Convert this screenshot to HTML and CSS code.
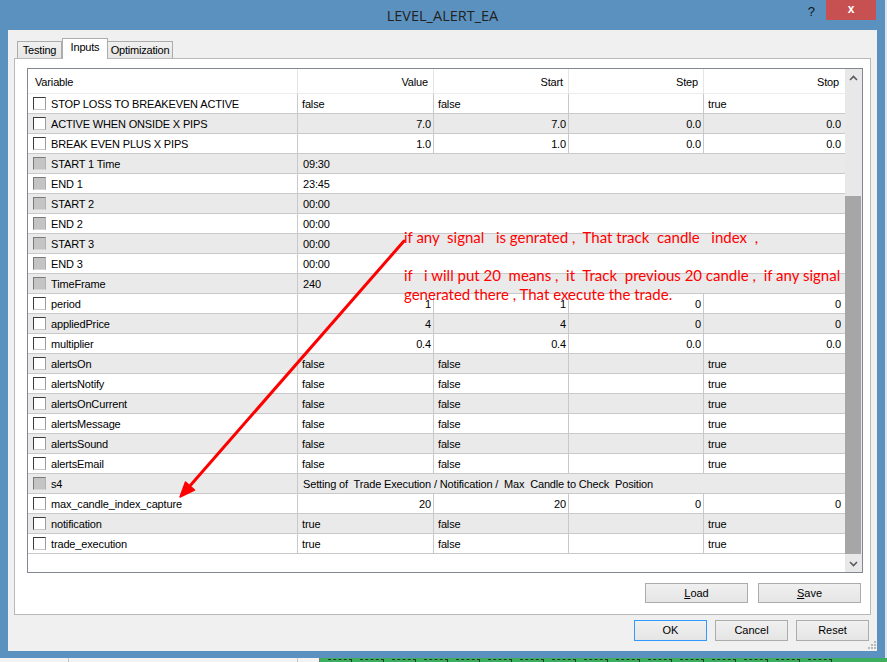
FILE: index.html
```html
<!DOCTYPE html>
<html>
<head>
<meta charset="utf-8">
<link rel="stylesheet" href="styles.css">
</head>
<body>
<div class="screen">
  <div class="top">
    <div class="window">
      <div class="titlebar">
        <div class="title">LEVEL_ALERT_EA</div>
        <div class="controls">
          <div class="help">?</div>
          <div class="close">x</div>
        </div>
      </div>
      <div class="client">
        <div class="tabs">
          <div class="tab t-testing">Testing</div>
          <div class="tab t-inputs active">Inputs</div>
          <div class="tab t-opt">Optimization</div>
        </div>
        <div class="panel">
          <div class="list">
            <div class="grid">
              <div class="head">
                <div class="h h-left">Variable</div>
                <div class="h">Value</div>
                <div class="h">Start</div>
                <div class="h">Step</div>
                <div class="h h-last">Stop</div>
              </div>
              <div class="rows">
                <div class="row"><div class="c name"><span class="cb"></span>STOP LOSS TO BREAKEVEN ACTIVE</div><div class="c">false</div><div class="c">false</div><div class="c"></div><div class="c last">true</div></div>
                <div class="row"><div class="c name"><span class="cb"></span>ACTIVE WHEN ONSIDE X PIPS</div><div class="c num">7.0</div><div class="c num">7.0</div><div class="c num">0.0</div><div class="c num last">0.0</div></div>
                <div class="row"><div class="c name"><span class="cb"></span>BREAK EVEN PLUS X PIPS</div><div class="c num">1.0</div><div class="c num">1.0</div><div class="c num">0.0</div><div class="c num last">0.0</div></div>
                <div class="row"><div class="c name"><span class="cb dis"></span>START 1 Time</div><div class="c span">09:30</div></div>
                <div class="row"><div class="c name"><span class="cb dis"></span>END 1</div><div class="c span">23:45</div></div>
                <div class="row"><div class="c name"><span class="cb dis"></span>START 2</div><div class="c span">00:00</div></div>
                <div class="row"><div class="c name"><span class="cb dis"></span>END 2</div><div class="c span">00:00</div></div>
                <div class="row"><div class="c name"><span class="cb dis"></span>START 3</div><div class="c span">00:00</div></div>
                <div class="row"><div class="c name"><span class="cb dis"></span>END 3</div><div class="c span">00:00</div></div>
                <div class="row"><div class="c name"><span class="cb dis"></span>TimeFrame</div><div class="c span">240</div></div>
                <div class="row"><div class="c name"><span class="cb"></span>period</div><div class="c num">1</div><div class="c num">1</div><div class="c num">0</div><div class="c num last">0</div></div>
                <div class="row"><div class="c name"><span class="cb"></span>appliedPrice</div><div class="c num">4</div><div class="c num">4</div><div class="c num">0</div><div class="c num last">0</div></div>
                <div class="row"><div class="c name"><span class="cb"></span>multiplier</div><div class="c num">0.4</div><div class="c num">0.4</div><div class="c num">0.0</div><div class="c num last">0.0</div></div>
                <div class="row"><div class="c name"><span class="cb"></span>alertsOn</div><div class="c">false</div><div class="c">false</div><div class="c"></div><div class="c last">true</div></div>
                <div class="row"><div class="c name"><span class="cb"></span>alertsNotify</div><div class="c">false</div><div class="c">false</div><div class="c"></div><div class="c last">true</div></div>
                <div class="row"><div class="c name"><span class="cb"></span>alertsOnCurrent</div><div class="c">false</div><div class="c">false</div><div class="c"></div><div class="c last">true</div></div>
                <div class="row"><div class="c name"><span class="cb"></span>alertsMessage</div><div class="c">false</div><div class="c">false</div><div class="c"></div><div class="c last">true</div></div>
                <div class="row"><div class="c name"><span class="cb"></span>alertsSound</div><div class="c">false</div><div class="c">false</div><div class="c"></div><div class="c last">true</div></div>
                <div class="row"><div class="c name"><span class="cb"></span>alertsEmail</div><div class="c">false</div><div class="c">false</div><div class="c"></div><div class="c last">true</div></div>
                <div class="row"><div class="c name"><span class="cb dis"></span>s4</div><div class="c span">Setting of  Trade Execution / Notification /  Max  Candle to Check  Position</div></div>
                <div class="row"><div class="c name"><span class="cb"></span>max_candle_index_capture</div><div class="c num">20</div><div class="c num">20</div><div class="c num">0</div><div class="c num last">0</div></div>
                <div class="row"><div class="c name"><span class="cb"></span>notification</div><div class="c">true</div><div class="c">false</div><div class="c"></div><div class="c last">true</div></div>
                <div class="row"><div class="c name"><span class="cb"></span>trade_execution</div><div class="c">true</div><div class="c">false</div><div class="c"></div><div class="c last">true</div></div>
              </div>
            </div>
            <div class="scrollbar">
              <div class="sb-btn"><svg width="9" height="6" viewBox="0 0 9 6"><polyline points="1,5 4.5,1.5 8,5" fill="none" stroke="#5a5a5a" stroke-width="1.6"/></svg></div>
              <div class="sb-gap"></div>
              <div class="sb-thumb"></div>
              <div class="sb-rest"></div>
              <div class="sb-btn"><svg width="9" height="6" viewBox="0 0 9 6"><polyline points="1,1 4.5,4.5 8,1" fill="none" stroke="#5a5a5a" stroke-width="1.6"/></svg></div>
            </div>
            <div class="note">if any  signal   is genrated ,  That track  candle   index  ,

if   i will put 20  means ,  it  Track  previous 20 candle ,  if any signal
generated there , That execute the trade.</div>
            <svg class="arrow" width="834" height="503" viewBox="0 0 834 503">
              <line x1="376" y1="172" x2="161" y2="418" stroke="#ff0000" stroke-width="3" stroke-linecap="round"/>
              <polygon points="152,428 157.5,413 166.5,421" fill="#ff0000" stroke="#ff0000" stroke-width="1.5" stroke-linejoin="round"/>
            </svg>
          </div>
          <div class="panel-buttons">
            <div class="btn wide"><u>L</u>oad</div>
            <div class="btn wide"><u>S</u>ave</div>
          </div>
        </div>
        <div class="dialog-buttons">
          <div class="btn default">OK</div>
          <div class="btn">Cancel</div>
          <div class="btn">Reset</div>
        </div>
        <svg class="grip" width="8" height="8" viewBox="0 0 8 8">
          <rect x="6" y="0" width="2" height="2" fill="#b8b8b8"/>
          <rect x="3" y="3" width="2" height="2" fill="#b8b8b8"/>
          <rect x="6" y="3" width="2" height="2" fill="#b8b8b8"/>
          <rect x="0" y="6" width="2" height="2" fill="#b8b8b8"/>
          <rect x="3" y="6" width="2" height="2" fill="#b8b8b8"/>
          <rect x="6" y="6" width="2" height="2" fill="#b8b8b8"/>
        </svg>
      </div>
    </div>
    <div class="side"></div>
  </div>
  <div class="bottom">
    <div class="bottom-left"><span class="seg s1"></span><span class="seg s2"></span><span class="seg s3"></span></div>
    <div class="bottom-green"><span class="tick"></span><span class="tick"></span><span class="tick"></span><span class="tick"></span><span class="tick"></span><span class="tick"></span><span class="tick"></span><span class="tick"></span><span class="tick"></span><span class="tick"></span><span class="tick"></span><span class="tick"></span><span class="tick"></span><span class="tick"></span><span class="tick"></span><span class="tick"></span></div>
  </div>
</div>
</body>
</html>
```

FILE: styles.css
```css
* { box-sizing: border-box; }

body {
  margin: 0;
  background: #ffffff;
  font-family: "Liberation Sans", Arial, sans-serif;
  font-size: 11px;
  color: #000;
}

.screen {
  width: 887px;
  height: 662px;
  overflow: hidden;
  display: flex;
  flex-direction: column;
}

.top {
  display: flex;
  height: 658px;
}

.window {
  width: 885px;
  height: 658px;
  background: #5b91bf;
  display: flex;
  flex-direction: column;
}

.side {
  flex: 1;
  background: #dfe5ec;
}

/* title bar */
.titlebar {
  height: 30px;
  display: grid;
  grid-template-columns: 1fr auto 1fr;
  align-items: start;
}

.title {
  grid-column: 2;
  font-family: "Open Sans", "Liberation Sans", sans-serif;
  font-size: 14.5px;
  line-height: 31px;
  color: #222;
}

.controls {
  grid-column: 3;
  justify-self: end;
  display: flex;
  align-items: flex-start;
  margin-right: 9px;
}

.help {
  font-family: "Liberation Sans", Arial, sans-serif;
  font-size: 13px;
  line-height: 14px;
  margin-top: 5px;
  margin-right: 11px;
  color: #111;
}

.close {
  width: 50px;
  height: 20px;
  background: #c75050;
  color: #fff;
  font-family: "Liberation Sans", Arial, sans-serif;
  font-size: 12px;
  font-weight: bold;
  line-height: 19px;
  text-align: center;
}

/* client */
.client {
  position: relative;
  flex: 1;
  margin: 0 8px 7px 8px;
  background: #f0f0f0;
  padding: 8px 6px 9px 6px;
  display: flex;
  flex-direction: column;
}

.tabs {
  height: 20px;
  display: flex;
  align-items: flex-end;
  padding-left: 3px;
}

.tab {
  height: 17px;
  border: 1px solid #acacac;
  border-bottom: none;
  background: linear-gradient(#f0f0f0, #e6e6e6);
  text-align: center;
  line-height: 17px;
  letter-spacing: -0.2px;
  color: #000;
}

.t-testing { width: 45px; }
.t-inputs { width: 46px; }
.t-opt { width: 66px; margin-left: -1px; }

.tab.active {
  height: 21px;
  margin-bottom: -1px;
  background: #fff;
  line-height: 16px;
  position: relative;
  z-index: 1;
}

.panel {
  height: 557px;
  background: #fff;
  border: 1px solid #b9b9b9;
  padding: 9px 7px 11px 12px;
  display: flex;
  flex-direction: column;
}

.list {
  position: relative;
  width: 836px;
  height: 505px;
  border: 1px solid #828790;
  display: flex;
  background: #fff;
}

.grid {
  width: 817px;
}

.head {
  height: 25px;
  display: grid;
  grid-template-columns: 270px 136px 135px 135px 141px;
  border-bottom: 1px solid #ececec;
}

.h {
  border-right: 1px solid #e5e5e5;
  text-align: right;
  padding-right: 5px;
  padding-top: 1px;
  line-height: 24px;
  letter-spacing: -0.15px;
}

.h-left {
  text-align: left;
  padding-left: 7px;
}

.h-last {
  border-right: none;
  padding-right: 6px;
}

.row {
  height: 20px;
  display: grid;
  grid-template-columns: 270px 136px 135px 135px 141px;
  border-bottom: 1px solid #c9c9c9;
}

.row:nth-child(even) {
  background: #eaeaea;
}

.c {
  border-right: 1px solid #c9c9c9;
  line-height: 20px;
  padding-left: 4px;
  padding-right: 2px;
  white-space: pre;
  overflow: hidden;
  letter-spacing: -0.15px;
}

.c.last {
  border-right: none;
  padding-right: 4px;
}

.c.num { text-align: right; }

.c.span {
  grid-column: 2 / -1;
  border-right: none;
  padding-left: 5px;
}

.c.name {
  display: flex;
  align-items: center;
  padding-left: 5px;
}

.cb {
  width: 13px;
  height: 13px;
  margin-right: 5px;
  flex: none;
  background: #fff;
  border-style: solid;
  border-width: 1px;
  border-color: #3c3c3c #9a9a9a #c8c8c8 #3c3c3c;
}

.cb.dis {
  background: #c4c4c4;
  border-color: #7a7a7a #b0b0b0 #d6d6d6 #7a7a7a;
}

/* scrollbar */
.scrollbar {
  width: 17px;
  background: #e8e8e8;
  display: flex;
  flex-direction: column;
}

.sb-btn {
  height: 17px;
  display: flex;
  align-items: center;
  justify-content: center;
}

.sb-gap { height: 110px; }

.sb-thumb {
  height: 358px;
  margin: 0 1px 0 0;
  background: #a6a6a6;
}

.sb-rest { flex: 1; }

/* annotation */
.note {
  position: absolute;
  left: 376px;
  top: 159px;
  font-family: Lato, "Liberation Sans", sans-serif;
  font-size: 15px;
  line-height: 19px;
  color: #ff0000;
  white-space: pre;
}

.arrow {
  position: absolute;
  left: 0;
  top: 0;
  pointer-events: none;
}

/* buttons */
.panel-buttons {
  margin-top: 10px;
  display: flex;
  justify-content: flex-end;
  gap: 10px;
  padding-right: 2px;
}

.btn {
  width: 73px;
  height: 21px;
  border: 1px solid #acacac;
  background: linear-gradient(#f0f0f0, #e5e5e5);
  text-align: center;
  line-height: 19px;
  font-size: 11px;
  color: #000;
}

.btn.wide {
  width: 103px;
  height: 20px;
  line-height: 18px;
}

.btn.default {
  border-color: #3399ff;
}

.dialog-buttons {
  margin-top: 5px;
  display: flex;
  justify-content: flex-end;
  gap: 8px;
  padding-right: 2px;
}

.grip {
  position: absolute;
  right: 1px;
  bottom: 2px;
}

/* outside strip */
.bottom {
  height: 4px;
  display: flex;
}

.bottom-left {
  width: 320px;
  background: #f3f3f3;
  display: flex;
}

.seg {
  height: 4px;
  border-right: 1px solid #c8c8c8;
}

.s1 { width: 69px; }
.s2 { width: 229px; }
.s3 { width: 22px; border-right: 1px solid #777; }

.bottom-green {
  flex: 1;
  background: #3cae5e;
  display: flex;
  gap: 8px;
  padding-left: 8px;
  padding-top: 1px;
}

.tick {
  width: 24px;
  height: 3px;
  border-top: 1px dashed #1c3d26;
  border-right: 1px solid #1c3d26;
}
```
